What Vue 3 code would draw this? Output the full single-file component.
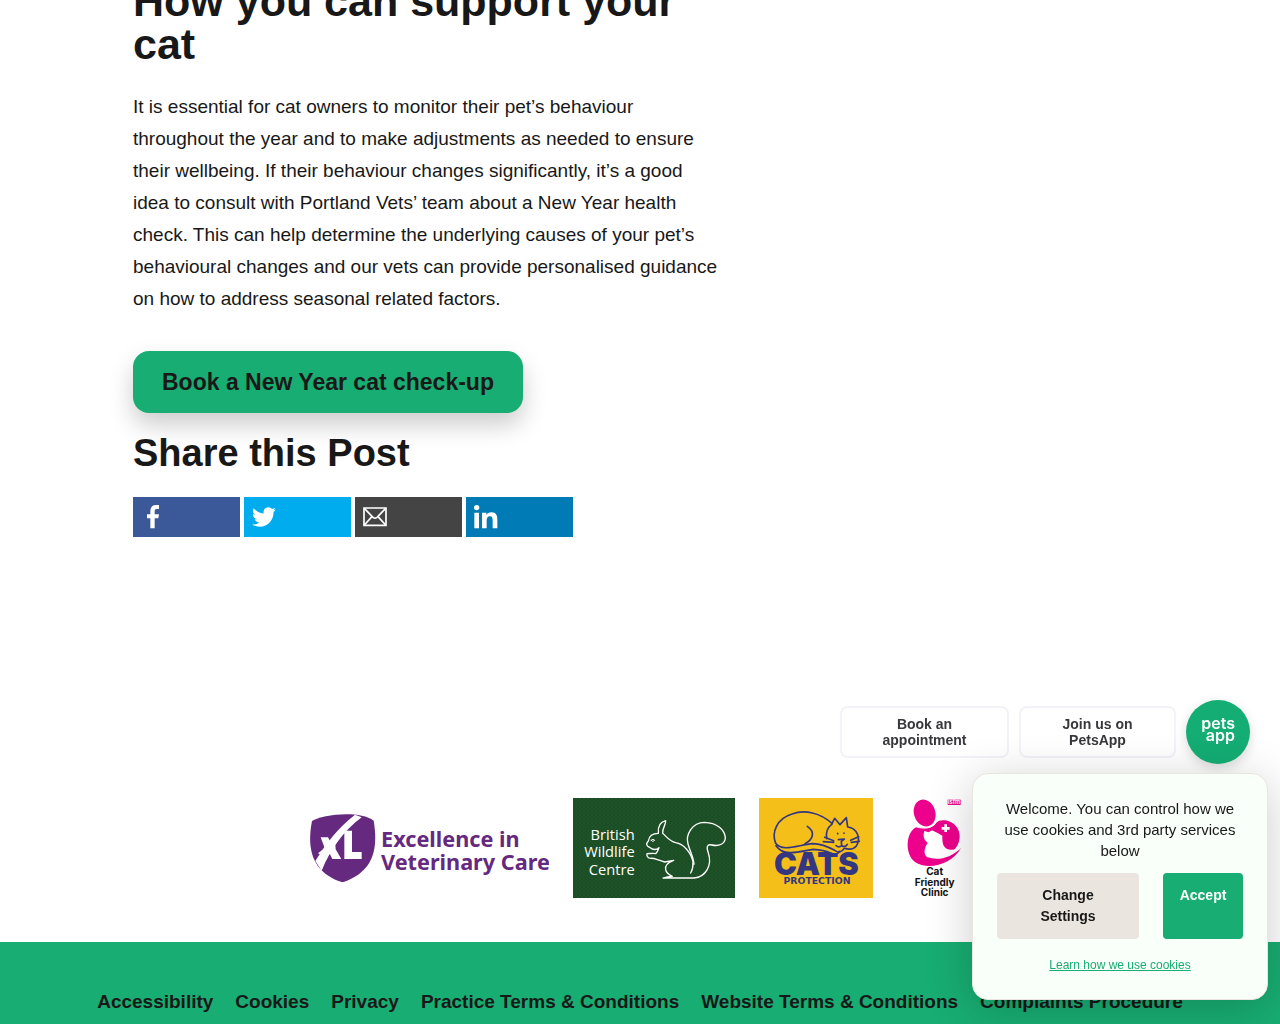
<script setup>
const footerLinks = [
  'Accessibility',
  'Cookies',
  'Privacy',
  'Practice Terms & Conditions',
  'Website Terms & Conditions',
  'Complaints Procedure',
]
</script>

<template>
  <div class="page">
    <main class="content">
      <article class="post">
        <h2 class="title">How you can support your cat</h2>
        <p class="body-text">
          It is essential for cat owners to monitor their pet’s behaviour throughout the year and to make
          adjustments as needed to ensure their wellbeing. If their behaviour changes significantly, it’s a good
          idea to consult with Portland Vets’ team about a New Year health check. This can help determine the
          underlying causes of your pet’s behavioural changes and our vets can provide personalised guidance on
          how to address seasonal related factors.
        </p>
        <a class="cta" href="#book">Book a New Year cat check-up</a>
        <h3 class="share-title">Share this Post</h3>
        <div class="share">
          <a class="share-link facebook" href="#facebook" aria-label="Share on Facebook">
            <svg viewBox="0 0 72 72"><path d="M28 70V40H18V28h10v-9C28 7 34 0 45 0h9v12h-7c-5 0-6 3-6 7v9h13l-2 12H41v30z" /></svg>
          </a>
          <a class="share-link twitter" href="#twitter" aria-label="Share on Twitter">
            <svg viewBox="0 0 24 24"><path d="M23.9 4.6a10 10 0 0 1-2.8.8 5 5 0 0 0 2.1-2.7c-.9.5-2 1-3.1 1.2a4.9 4.9 0 0 0-8.4 4.5A14 14 0 0 1 1.7 3.2a4.9 4.9 0 0 0 1.5 6.5 4.9 4.9 0 0 1-2.2-.6v.1a4.9 4.9 0 0 0 3.9 4.8 5 5 0 0 1-2.2.1 4.9 4.9 0 0 0 4.600 3.400A9.900 9.900 0 0 1 0 19.500a14 14 0 0 0 7.500 2.200c9.100 0 14-7.500 14-14v-.6a10 10 0 0 0 2.400-2.500z" /></svg>
          </a>
          <a class="share-link email" href="#email" aria-label="Share by email">
            <svg viewBox="0 0 72 72">
              <g fill="none" stroke="#fff" stroke-width="5">
                <path d="M3 9h66v52H3z" />
                <path d="M4 10l26 27q6 5 12 0l26-27M4 60l23-25M68 60L45 35" />
              </g>
            </svg>
          </a>
          <a class="share-link linkedin" href="#linkedin" aria-label="Share on LinkedIn">
            <svg viewBox="0 0 72 72"><circle cx="8" cy="8" r="8" /><path d="M1 23h14v47H1zM24 23h13v7c3-5 8-8 15-8 15 0 18 10 18 22v26H56V47c0-7-1-13-8-13-8 0-10 6-10 13v23H24z" /></svg>
          </a>
        </div>
      </article>

      <div class="logos">
        <svg class="logo xl" viewBox="27 24 720 300" role="img" aria-label="XL Excellence in Veterinary Care">
          <path fill="#65297f" d="M36 93C65 73 180 60 221 92C235 175 222 245 128 277C42 250 18 185 36 93z" />
          <path fill="#fff" d="M165 74C115 112 77 161 46 213L65 242C90 182 128 124 185 82z" />
          <path fill="#fff" d="M62 142H84L93 158L105 150L107 178L124 207H97L88 189L74 200L54 190L74 174zM133 122H156V186H185V207H133z" />
          <g class="xl-text">
            <text x="243" y="171">Excellence in</text>
            <text x="243" y="239">Veterinary Care</text>
          </g>
        </svg>

        <svg class="logo bwc" viewBox="24 24 486 300" role="img" aria-label="British Wildlife Centre">
          <defs>
            <pattern id="weave" width="12" height="12" patternUnits="userSpaceOnUse">
              <path d="M1 2h4v3H1zM7 8h4v3H7z" fill="#17421e" />
              <path d="M7 2h3v3H7z" fill="#22592b" />
            </pattern>
          </defs>
          <path fill="#1d5127" d="M24 24h486v300H24z" />
          <path fill="url(#weave)" d="M24 24h486v300H24z" />
          <g class="bwc-text">
            <text x="209" y="149">British</text>
            <text x="209" y="202">Wildlife</text>
            <text x="209" y="255">Centre</text>
          </g>
          <g fill="none" stroke="#fff" stroke-width="4" stroke-linecap="round" stroke-linejoin="round">
            <path d="M280 130C278 110 286 96 302 92C303 105 291 115 293 130C304 139 313 154 332 158C355 161 379 188 384 216Q385 235 377 249" />
            <path d="M280 130C261 130 252 139 250 153C241 162 246 169 252 171C262 179 274 181 282 173C279 182 275 188 272 191C264 189 256 191 246 191C244 198 249 205 257 205C266 203 276 210 299 216L326 211C310 217 299 226 302 239Q304 251 322 259Q307 259 294 264H387C423 261 442 225 430 189C424 172 425 161 441 165C463 170 480 161 481 144C480 119 456 98 418 97C382 97 361 134 369 162C375 184 387 205 387 223" />
            <path d="M258 151q7-7 11 0q-6 7-11 0" stroke-width="3" />
          </g>
        </svg>

        <svg class="logo cats" viewBox="27 24 342 300" role="img" aria-label="Cats Protection">
          <path fill="#f3bf18" d="M27 24h342v300H27z" />
          <text class="cats-name" x="199" y="255">CATS</text>
          <path fill="#f3bf18" d="M77 160C60 108 116 66 158 67C200 66 229 82 247 99L254 85L270 104L289 83L294 110C326 115 331 150 321 173C311 186 293 179 277 185C260 200 242 185 216 178C183 177 156 193 126 187Q91 184 77 160z" />
          <g fill="none" stroke="#343681" stroke-width="5" stroke-linecap="round" stroke-linejoin="round">
            <path d="M247 101C211 68 164 58 126 72C80 86 64 127 77 160C97 187 144 165 188 161Q219 162 254 181Q271 193 282 176" />
            <path d="M78 167C103 204 157 182 190 178Q221 179 246 191Q262 196 268 184M172 109C198 127 188 149 165 161M245 102L254 85L270 104L289 83L293 111C321 114 334 145 319 168Q308 182 284 175M245 103Q225 119 230 146M224 142L251 152M220 155L251 157M302 151L326 140M304 157L328 154M263 130v1M282 129v1M265 149L283 147L274 154L275 167Q267 174 258 167M275 167Q286 173 292 163" />
          </g>
          <text class="cats-sub" x="201" y="283">PROTECTION</text>
        </svg>

        <svg class="logo cfc" viewBox="21 24 222 300" role="img" aria-label="isfm Cat Friendly Clinic">
          <g fill="#ec008c">
            <ellipse cx="104" cy="69" rx="32" ry="41" transform="rotate(-18 104 69)" />
            <path d="M80 111C47 125 43 192 75 216C115 244 187 222 213 174C200 184 193 187 184 188C224 157 215 100 166 91Q148 89 138 98C133 112 107 119 80 111z" />
            <path d="M173 29h39v16h-39z" />
          </g>
          <path fill="#fff" d="M103 123L116 127L126 121Q143 129 157 137C157 159 158 176 182 179Q195 179 211 176C182 202 148 213 112 202C99 193 103 173 113 159C100 148 99 137 103 123zM163 103h8v8h8v8h-8v7h-8v-7h-8v-8h8z" />
          <path fill="none" stroke="#fff" stroke-width="3" d="M78 110C105 119 127 114 139 97" />
          <text class="isfm" x="192" y="43">isfm</text>
          <g class="cfc-text">
            <text x="134" y="256">Cat</text>
            <text x="134" y="287">Friendly</text>
            <text x="134" y="317">Clinic</text>
          </g>
        </svg>
      </div>
    </main>

    <footer class="footer">
      <nav class="footer-nav">
        <a v-for="link in footerLinks" :key="link" href="#">{{ link }}</a>
      </nav>
    </footer>

    <aside class="chat">
      <button class="chat-option wide" type="button">Book an<br />appointment</button>
      <button class="chat-option" type="button">Join us on<br />PetsApp</button>
      <button class="chat-launcher" type="button" aria-label="Open PetsApp">
        <svg viewBox="0 0 64 64">
          <text x="49" y="29">pets</text>
          <text x="49" y="41">app</text>
        </svg>
      </button>
    </aside>

    <section class="cookies" aria-label="Cookie settings">
      <p>Welcome. You can control how we use cookies and 3rd party services below</p>
      <div class="cookie-actions">
        <button class="settings" type="button">Change Settings</button>
        <button class="accept" type="button">Accept</button>
      </div>
      <a class="learn" href="#cookies">Learn how we use cookies</a>
    </section>
  </div>
</template>

<style>
body {
  margin: 0;
  background: #fff;
}
</style>

<style scoped>
.page {
  display: flex;
  flex-direction: column;
  height: 100vh;
  overflow: hidden;
  color: #181818;
  font-family: "Liberation Sans", Arial, sans-serif;
}

.content {
  flex: none;
  padding-bottom: 44px;
}

.post {
  box-sizing: border-box;
  max-width: 1014px;
  margin: -20px auto 0;
  padding-right: 426px;
}

.title {
  margin: 0 0 25px;
  font-size: 43px;
  line-height: 43px;
}

.body-text {
  margin: 0 0 36px;
  font-size: 19px;
  line-height: 32px;
}

.cta {
  display: inline-block;
  padding: 16px 29px;
  border-radius: 16px;
  background: #18ad72;
  box-shadow: 0 12px 24px rgba(0, 0, 0, 0.2);
  color: #181818;
  font-size: 23px;
  font-weight: bold;
  line-height: 30px;
  text-decoration: none;
}

.share-title {
  margin: 18px 0 22px;
  font-size: 38px;
  line-height: 44px;
}

.share {
  display: flex;
  gap: 4px;
}

.share-link {
  display: flex;
  align-items: center;
  box-sizing: border-box;
  width: 107px;
  height: 40px;
  padding-left: 8px;
}

.share-link svg {
  width: 24px;
  height: 24px;
  fill: #fff;
}

.facebook {
  background: #3b5998;
}

.twitter {
  background: #00aced;
}

.email {
  background: #444;
}

.linkedin {
  background: #007bb6;
}

.logos {
  display: flex;
  justify-content: center;
  gap: 24px;
  margin-top: 261px;
}

.logo {
  height: 100px;
}

.xl {
  width: 240px;
}

.bwc {
  width: 162px;
}

.cats {
  width: 114px;
}

.cfc {
  width: 74px;
}

.xl-text {
  fill: #65297f;
  font: bold 65px "Noto Sans", sans-serif;
}

.bwc-text {
  fill: #fff;
  font: 44px "Open Sans", sans-serif;
  text-anchor: end;
}

.cats-name {
  fill: #343681;
  font: 900 92px Inter, sans-serif;
  text-anchor: middle;
}

.cats-sub {
  fill: #343681;
  font: bold 28px "DejaVu Sans", sans-serif;
  text-anchor: middle;
}

.isfm {
  fill: #fff;
  font: bold 17px Inter, sans-serif;
  text-anchor: middle;
}

.cfc-text {
  fill: #111;
  font: 700 30px Inter, sans-serif;
  text-anchor: middle;
}

.footer {
  flex: 1 0 auto;
  padding: 48px 24px 0;
  background: #18ad72;
}

.footer-nav {
  display: flex;
  justify-content: center;
  gap: 22px;
}

.footer-nav a {
  color: #181818;
  font-size: 19px;
  font-weight: bold;
  line-height: 24px;
  text-decoration: none;
  white-space: nowrap;
}

.chat {
  position: fixed;
  right: 30px;
  bottom: 260px;
  display: flex;
  align-items: center;
  gap: 10px;
}

.chat-option {
  width: 157px;
  padding: 8px;
  border: 2px solid #f2f2f8;
  border-radius: 8px;
  background: #fff;
  color: #38383c;
  font: bold 14px/16px "Liberation Sans", Arial, sans-serif;
}

.wide {
  width: 169px;
}

.chat-launcher {
  width: 64px;
  height: 64px;
  padding: 0;
  border: 0;
  border-radius: 50%;
  background: #14ad74;
  box-shadow: 0 4px 12px rgba(0, 0, 0, 0.15);
}

.chat-launcher svg {
  display: block;
  width: 64px;
  height: 64px;
  fill: #fff;
  font: 600 16px Inter, sans-serif;
  text-anchor: end;
}

.cookies {
  position: fixed;
  right: 12px;
  bottom: 24px;
  box-sizing: border-box;
  width: 296px;
  padding: 24px;
  border: 1px solid #eae5de;
  border-radius: 16px;
  background: #f9fff9;
  box-shadow: 0 8px 48px rgba(0, 0, 0, 0.2);
  text-align: center;
}

.cookies p {
  margin: 0 0 12px;
  font-size: 15px;
  line-height: 21px;
}

.cookie-actions {
  display: flex;
  gap: 24px;
  margin-bottom: 16px;
}

.cookie-actions button {
  display: flex;
  justify-content: center;
  padding: 12px 16px;
  border: 0;
  border-radius: 4px;
  font: bold 14px/21px "Liberation Sans", Arial, sans-serif;
}

.cookie-actions .settings {
  flex: 1;
  padding: 12px 32px;
  background: #eae5de;
  color: #181818;
}

.cookie-actions .accept {
  flex: none;
  width: 80px;
  background: #18ad72;
  color: #fff;
}

.learn {
  display: block;
  color: #18ad72;
  font-size: 12px;
  line-height: 20px;
}
</style>
